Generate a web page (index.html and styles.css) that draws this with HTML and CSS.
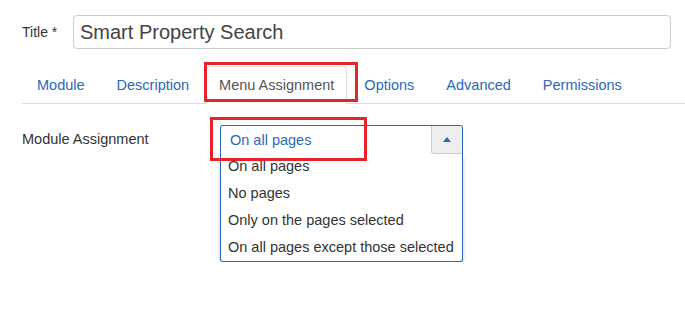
FILE: index.html
```html
<!DOCTYPE html>
<html>

<head>
  <meta charset="utf-8">
  <meta name="viewport" content="width=device-width">
  <title>Module Assignment</title>
  <link rel="stylesheet" href="styles.css">
</head>

<body>
  <div class="title-row">
    <label class="title-label">Title *</label>
    <input class="title-input" type="text" value="Smart Property Search">
  </div>

  <ul class="nav-tabs">
    <li><a>Module</a></li>
    <li><a>Description</a></li>
    <li class="active">
      <a>Menu Assignment</a>
      <span class="mark mark-tab"></span>
    </li>
    <li><a>Options</a></li>
    <li><a>Advanced</a></li>
    <li><a>Permissions</a></li>
  </ul>

  <div class="form-row">
    <label class="control-label">Module Assignment</label>
    <div class="chzn">
      <div class="chzn-single">
        <span class="chzn-value">On all pages</span>
        <span class="chzn-arrow"></span>
      </div>
      <ul class="chzn-results">
        <li>On all pages</li>
        <li>No pages</li>
        <li>Only on the pages selected</li>
        <li>On all pages except those selected</li>
      </ul>
      <span class="mark mark-select"></span>
    </div>
  </div>
</body>

</html>
```

FILE: styles.css
```css
/* Reset default styles */
body,
ul,
li {
  margin: 0;
  padding: 0;
}

body {
  background-color: #ffffff;
  font-family: "Liberation Sans", Arial, sans-serif;
  font-size: 14.5px;
  color: #333333;
  padding: 15px 0 0 22px;
}

/* Title field */
.title-row {
  display: flex;
  align-items: center;
}

.title-label {
  width: 51px;
  font-size: 14px;
}

.title-input {
  box-sizing: border-box;
  width: 598px;
  height: 34px;
  margin: 0;
  padding: 0 6px;
  border: 1px solid #cccccc;
  border-radius: 4px;
  font-family: inherit;
  font-size: 20px;
  color: #444444;
  outline: none;
}

/* Tabs */
.nav-tabs {
  list-style: none;
  display: flex;
  margin-top: 17px;
  border-bottom: 1px solid #dddddd;
}

.nav-tabs li {
  margin-right: 2px;
  margin-bottom: -1px;
}

.nav-tabs a {
  display: block;
  padding: 8px 14px;
  line-height: 20px;
  color: #2a69b8;
  border: 1px solid transparent;
  border-radius: 4px 4px 0 0;
}

.nav-tabs .active {
  position: relative;
}

.nav-tabs .active a {
  padding: 8px 12px;
  color: #555555;
  background-color: #ffffff;
  border-color: #dddddd #dddddd transparent;
}

/* Module assignment row */
.form-row {
  display: flex;
  margin-top: 21px;
}

.control-label {
  width: 198px;
  line-height: 28px;
}

.chzn {
  position: relative;
  width: 243px;
}

.chzn-single {
  display: flex;
  justify-content: space-between;
  height: 27px;
  border: 1px solid #2a69b8;
  border-bottom: none;
  border-radius: 3px 3px 0 0;
}

.chzn-value {
  padding-left: 9px;
  line-height: 28px;
  color: #2a69b8;
}

.chzn-arrow {
  position: relative;
  width: 30px;
  height: 27px;
  background-color: #eeeeee;
  border-left: 1px solid #cccccc;
  border-bottom: 1px solid #cccccc;
  border-radius: 0 2px 0 3px;
}

.chzn-arrow::after {
  content: "";
  position: absolute;
  left: 11px;
  top: 11px;
  border-left: 4px solid transparent;
  border-right: 4px solid transparent;
  border-bottom: 5px solid #2a69b8;
}

.chzn-results {
  list-style: none;
  border: 1px solid #2a69b8;
  border-top: none;
  border-radius: 0 0 3px 3px;
  box-shadow: 0 3px 4px rgba(0, 0, 0, 0.2);
}

.chzn-results li {
  padding-left: 7px;
  line-height: 27px;
  color: #333333;
}

/* Red highlight boxes drawn over the screenshot */
.mark {
  position: absolute;
  border: 3px solid #e3242b;
  pointer-events: none;
}

.mark-tab {
  left: -2px;
  top: -4px;
  width: 148px;
  height: 34px;
}

.mark-select {
  left: -10px;
  top: -8px;
  width: 151px;
  height: 38px;
}
```
